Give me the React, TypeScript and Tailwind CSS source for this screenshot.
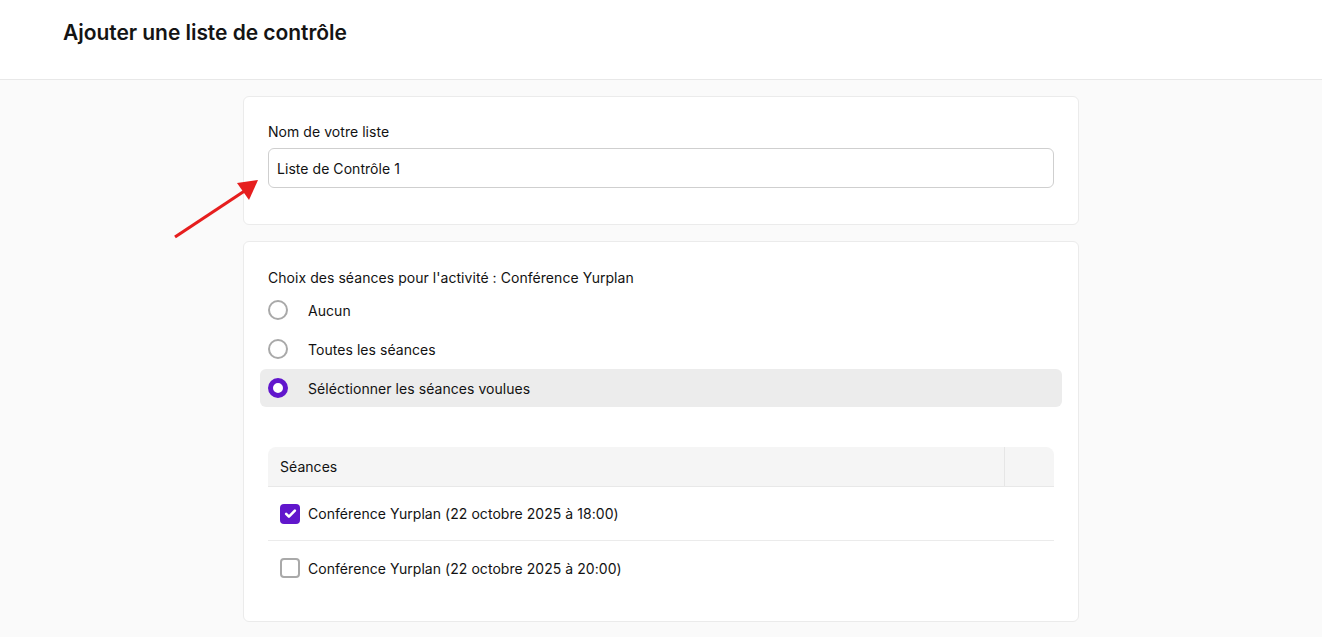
import React from "react";

function Radio({ checked }: { checked?: boolean }) {
  return checked ? (
    <span className="w-5 h-5 rounded-full border-[5px] border-[#6116cc] bg-white shrink-0" />
  ) : (
    <span className="w-5 h-5 rounded-full border-2 border-[#a9a9a9] bg-white shrink-0" />
  );
}

function Checkbox({ checked }: { checked?: boolean }) {
  return checked ? (
    <span className="w-5 h-5 rounded-[4px] bg-[#6116cc] flex items-center justify-center shrink-0">
      <svg width="15" height="15" viewBox="0 0 24 24" fill="none" stroke="white" strokeWidth="4.2" strokeLinecap="round" strokeLinejoin="round">
        <path d="M5 12.5l4.5 4.5L19 7.5" />
      </svg>
    </span>
  ) : (
    <span className="w-5 h-5 rounded-[4px] border-2 border-[#a9a9a9] bg-white shrink-0" />
  );
}

export default function App() {
  return (
    <div className="min-h-[637px] bg-[#fafafa] text-[#121212] relative" style={{ fontFamily: "Inter, 'Noto Sans', sans-serif" }}>
      <header className="h-[80px] bg-white border-b border-[#e8e8e8] flex items-center pl-[63px] pb-[14px]">
        <h1 className="text-[21px] font-semibold text-[#141414] tracking-[-0.05px]">Ajouter une liste de contrôle</h1>
      </header>
      <main className="flex flex-col items-center pt-4 gap-4 pb-4">
        <section className="w-[836px] bg-white border border-[#ebebeb] rounded-[6px] px-6 pt-[25px] pb-[36px]">
          <div className="text-[14px] leading-[20px] mb-[6px] tracking-[0.05px]">Nom de votre liste</div>
          <div className="h-10 border border-[#cfcfcf] rounded-[6px] flex items-center px-2 text-[14px] tracking-[0.05px]">Liste de Contrôle 1</div>
        </section>
        <section className="w-[836px] bg-white border border-[#ebebeb] rounded-[6px] px-6 pt-[26px] pb-[26px]">
          <div className="text-[14px] leading-[20px] mb-[3px] tracking-[0.05px]">Choix des séances pour l'activité : Conférence Yurplan</div>
          <div className="flex flex-col gap-[1px] tracking-[0.05px]">
            <div className="h-[38px] flex items-center gap-5 text-[14px]">
              <Radio />
              <span>Aucun</span>
            </div>
            <div className="h-[38px] flex items-center gap-5 text-[14px]">
              <Radio />
              <span>Toutes les séances</span>
            </div>
            <div className="h-[38px] flex items-center gap-5 text-[14px] bg-[#ececec] rounded-[6px] -mx-2 px-2">
              <Radio checked />
              <span>Séléctionner les séances voulues</span>
            </div>
          </div>
          <div className="mt-[40px] tracking-[0.05px]">
            <div className="h-10 bg-[#f5f5f5] rounded-t-[8px] flex border-b border-[#e8e8e8] text-[14px]">
              <div className="flex-1 flex items-center px-3">Séances</div>
              <div className="w-[50px] border-l border-[#e6e6e6]" />
            </div>
            <div className="h-[54px] flex items-center gap-2 px-3 border-b border-[#ebebeb] text-[14px]">
              <Checkbox checked />
              <span>Conférence Yurplan (22 octobre 2025 à 18:00)</span>
            </div>
            <div className="h-[54px] flex items-center gap-2 px-3 text-[14px]">
              <Checkbox />
              <span>Conférence Yurplan (22 octobre 2025 à 20:00)</span>
            </div>
          </div>
        </section>
      </main>
      <svg className="absolute left-[170px] top-[175px] pointer-events-none" width="95" height="70" viewBox="0 0 95 70">
        <line x1="5" y1="62" x2="76" y2="15" stroke="#e61e1e" strokeWidth="3.2" />
        <polygon points="88,5 67,8 79,25" fill="#e61e1e" />
      </svg>
    </div>
  );
}
